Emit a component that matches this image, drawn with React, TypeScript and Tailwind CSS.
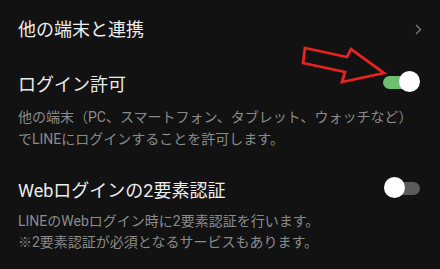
import React from 'react';

const Toggle: React.FC<{ on: boolean }> = ({ on }) => (
  <div className="relative w-[37px] h-[22px] shrink-0">
    <div
      className={`absolute left-0 right-[1px] top-[5px] h-[13px] rounded-full ${
        on ? 'bg-[#6cc06e]' : 'bg-[#5a5a5a]'
      }`}
    />
    <div
      className={`absolute top-0 w-[21px] h-[21px] rounded-full bg-white ${
        on ? 'right-0' : 'left-0'
      }`}
    />
  </div>
);

const App: React.FC = () => {
  return (
    <div
      className="relative w-[440px] h-[269px] bg-[#121212] overflow-hidden text-[#ececec]"
      style={{ fontFamily: 'Roboto, "Noto Sans CJK JP", sans-serif' }}
    >
      {/* 他の端末と連携 */}
      <div className="flex items-center justify-between h-[60px] pl-[18px] pr-[18px]">
        <span className="text-[18px] leading-[26px]">他の端末と連携</span>
        <svg width="7" height="11" viewBox="0 0 7 11" className="mt-[-2px]">
          <path d="M1 1 L5.5 5.5 L1 10" fill="none" stroke="#7a7a7a" strokeWidth="1.4" />
        </svg>
      </div>

      {/* ログイン許可 */}
      <div className="pl-[18px] pr-[20px] pt-[12px]">
        <div className="flex items-center justify-between">
          <span className="text-[18px] leading-[26px]">ログイン許可</span>
          <div className="mt-[-7px]">
            <Toggle on />
          </div>
        </div>
        <p className="mt-[8px] text-[14px] leading-[22px] text-[#8a8a8a]">
          他の端末（PC、スマートフォン、タブレット、ウォッチなど）
          <br />
          でLINEにログインすることを許可します。
        </p>
      </div>

      {/* Webログインの2要素認証 */}
      <div className="pl-[18px] pr-[19px] pt-[28px]">
        <div className="flex items-center justify-between">
          <span className="text-[18px] leading-[26px]">Webログインの2要素認証</span>
          <div className="mt-[-6px]">
            <Toggle on={false} />
          </div>
        </div>
        <p className="mt-[7px] text-[14px] leading-[21px] text-[#8a8a8a]">
          LINEのWebログイン時に2要素認証を行います。
          <br />
          ※2要素認証が必須となるサービスもあります。
        </p>
      </div>

      {/* annotation arrow */}
      <svg className="absolute left-0 top-0 pointer-events-none" width="440" height="269">
        <polygon
          points="305,48 347,57 351,49 384,73 342,82 345,72 303,63"
          fill="none"
          stroke="#e8231f"
          strokeWidth="2.8"
          strokeLinejoin="miter"
        />
      </svg>
    </div>
  );
};

export default App;
